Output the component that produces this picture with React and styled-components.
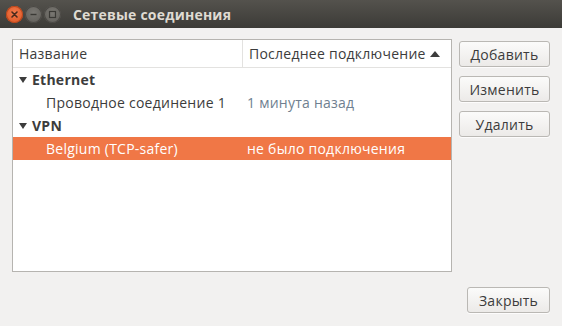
import React from "react";
import styled, { createGlobalStyle } from "styled-components";

const Global = createGlobalStyle`
  html, body { margin: 0; padding: 0; background: #f2f1f0; }
  body { font-family: "Open Sans", "DejaVu Sans", sans-serif; }
`;

const Window = styled.div`
  width: 562px;
  height: 326px;
  display: flex;
  flex-direction: column;
  background: #f2f1f0;
  overflow: hidden;
`;

const TitleBar = styled.div`
  height: 28px;
  display: flex;
  align-items: center;
  padding-left: 6px;
  background: linear-gradient(#54524d, #3c3b37);
  box-sizing: border-box;
`;

const Controls = styled.div`
  display: flex;
  gap: 2px;
  align-items: center;
`;

const WinBtn = styled.div`
  width: 17px;
  height: 17px;
  border-radius: 50%;
  display: flex;
  align-items: center;
  justify-content: center;
  background: ${p => p.$close
    ? "radial-gradient(circle at 50% 40%, #f47a4c, #d9521f)"
    : "radial-gradient(circle at 50% 40%, #7a7873, #5c5a55)"};
  box-shadow: inset 0 0 0 1px ${p => (p.$close ? "#b8461c" : "#4a4844")};
`;

const Title = styled.div`
  margin-left: 12px;
  color: #dfdbd2;
  font-weight: 700;
  font-size: 14px;
  letter-spacing: 0.2px;
`;

const Body = styled.div`
  flex: 1;
  display: flex;
  flex-direction: column;
  padding: 11px 12px 13px 12px;
`;

const Main = styled.div`
  display: flex;
  gap: 7px;
`;

const Tree = styled.div`
  width: 440px;
  height: 233px;
  box-sizing: border-box;
  background: #fff;
  border: 1px solid #b6b4b0;
  display: flex;
  flex-direction: column;
  letter-spacing: 0.25px;
`;

const HeaderRow = styled.div`
  display: grid;
  grid-template-columns: 229px 1fr;
  height: 27px;
  border-bottom: 1px solid #e3e2e0;
`;

const HeaderCell = styled.div`
  display: flex;
  align-items: center;
  padding-left: 6px;
  font-size: 14px;
  color: #3c3c3c;
  border-left: ${p => (p.$sep ? "1px solid #e3e2e0" : "none")};
  justify-content: space-between;
  padding-right: 11px;
`;

const Row = styled.div`
  display: grid;
  grid-template-columns: 229px 1fr;
  height: 23px;
  align-items: center;
  font-size: 14px;
  background: ${p => (p.$selected ? "#f07746" : "transparent")};
  color: ${p => (p.$selected ? "#ffffff" : "#3c3c3c")};
`;

const Cell = styled.div`
  display: flex;
  align-items: center;
  padding-left: ${p => p.$indent || 0}px;
  font-weight: ${p => (p.$bold ? 700 : 400)};
  color: ${p => p.$muted ? "#6f7f90" : "inherit"};
  white-space: nowrap;
`;

const Arrow = styled.span`
  display: inline-block;
  width: 0;
  height: 0;
  border-left: 4.5px solid transparent;
  border-right: 4.5px solid transparent;
  border-top: 6px solid #3c3c3c;
  margin: 0 5px 0 6px;
`;

const SortUp = styled.span`
  display: inline-block;
  width: 0;
  height: 0;
  border-left: 5px solid transparent;
  border-right: 5px solid transparent;
  border-bottom: 6px solid #3c3c3c;
`;

const Buttons = styled.div`
  display: flex;
  flex-direction: column;
  gap: 9px;
  padding-top: 2px;
`;

const Button = styled.button`
  width: ${p => p.$w || 91}px;
  height: 26px;
  box-sizing: border-box;
  border: 1px solid #bab8b4;
  border-radius: 3px;
  background: linear-gradient(#fbfbfa, #eceae8);
  box-shadow: 0 1px 0 rgba(255,255,255,0.8);
  font-family: "Open Sans", "DejaVu Sans", sans-serif;
  font-size: 14px;
  letter-spacing: 0.25px;
  color: #3c3c3c;
  padding: 0;
`;

const Footer = styled.div`
  margin-top: auto;
  display: flex;
  justify-content: flex-end;
`;

export default function App() {
  return (
    <Window>
      <Global />
      <TitleBar>
        <Controls>
          <WinBtn $close>
            <svg width="9" height="9" viewBox="0 0 9 9">
              <path d="M2 2 L7 7 M7 2 L2 7" stroke="#4a2a1c" strokeWidth="1.6" strokeLinecap="round" />
            </svg>
          </WinBtn>
          <WinBtn>
            <svg width="9" height="9" viewBox="0 0 9 9">
              <path d="M1.5 4.5 H7.5" stroke="#3a3935" strokeWidth="1.4" />
            </svg>
          </WinBtn>
          <WinBtn>
            <svg width="9" height="9" viewBox="0 0 9 9">
              <rect x="1.5" y="1.5" width="6" height="6" fill="none" stroke="#3a3935" strokeWidth="1.2" />
            </svg>
          </WinBtn>
        </Controls>
        <Title>Сетевые соединения</Title>
      </TitleBar>
      <Body>
        <Main>
          <Tree>
            <HeaderRow>
              <HeaderCell>Название</HeaderCell>
              <HeaderCell $sep>
                Последнее подключение <SortUp />
              </HeaderCell>
            </HeaderRow>
            <Row>
              <Cell $bold><Arrow />Ethernet</Cell>
              <Cell />
            </Row>
            <Row>
              <Cell $indent={33}>Проводное соединение 1</Cell>
              <Cell $muted $indent={5}>1 минута назад</Cell>
            </Row>
            <Row>
              <Cell $bold><Arrow />VPN</Cell>
              <Cell />
            </Row>
            <Row $selected>
              <Cell $indent={33}>Belgium (TCP-safer)</Cell>
              <Cell $indent={5}>не было подключения</Cell>
            </Row>
          </Tree>
          <Buttons>
            <Button>Добавить</Button>
            <Button>Изменить</Button>
            <Button>Удалить</Button>
          </Buttons>
        </Main>
        <Footer>
          <Button $w={83}>Закрыть</Button>
        </Footer>
      </Body>
    </Window>
  );
}
